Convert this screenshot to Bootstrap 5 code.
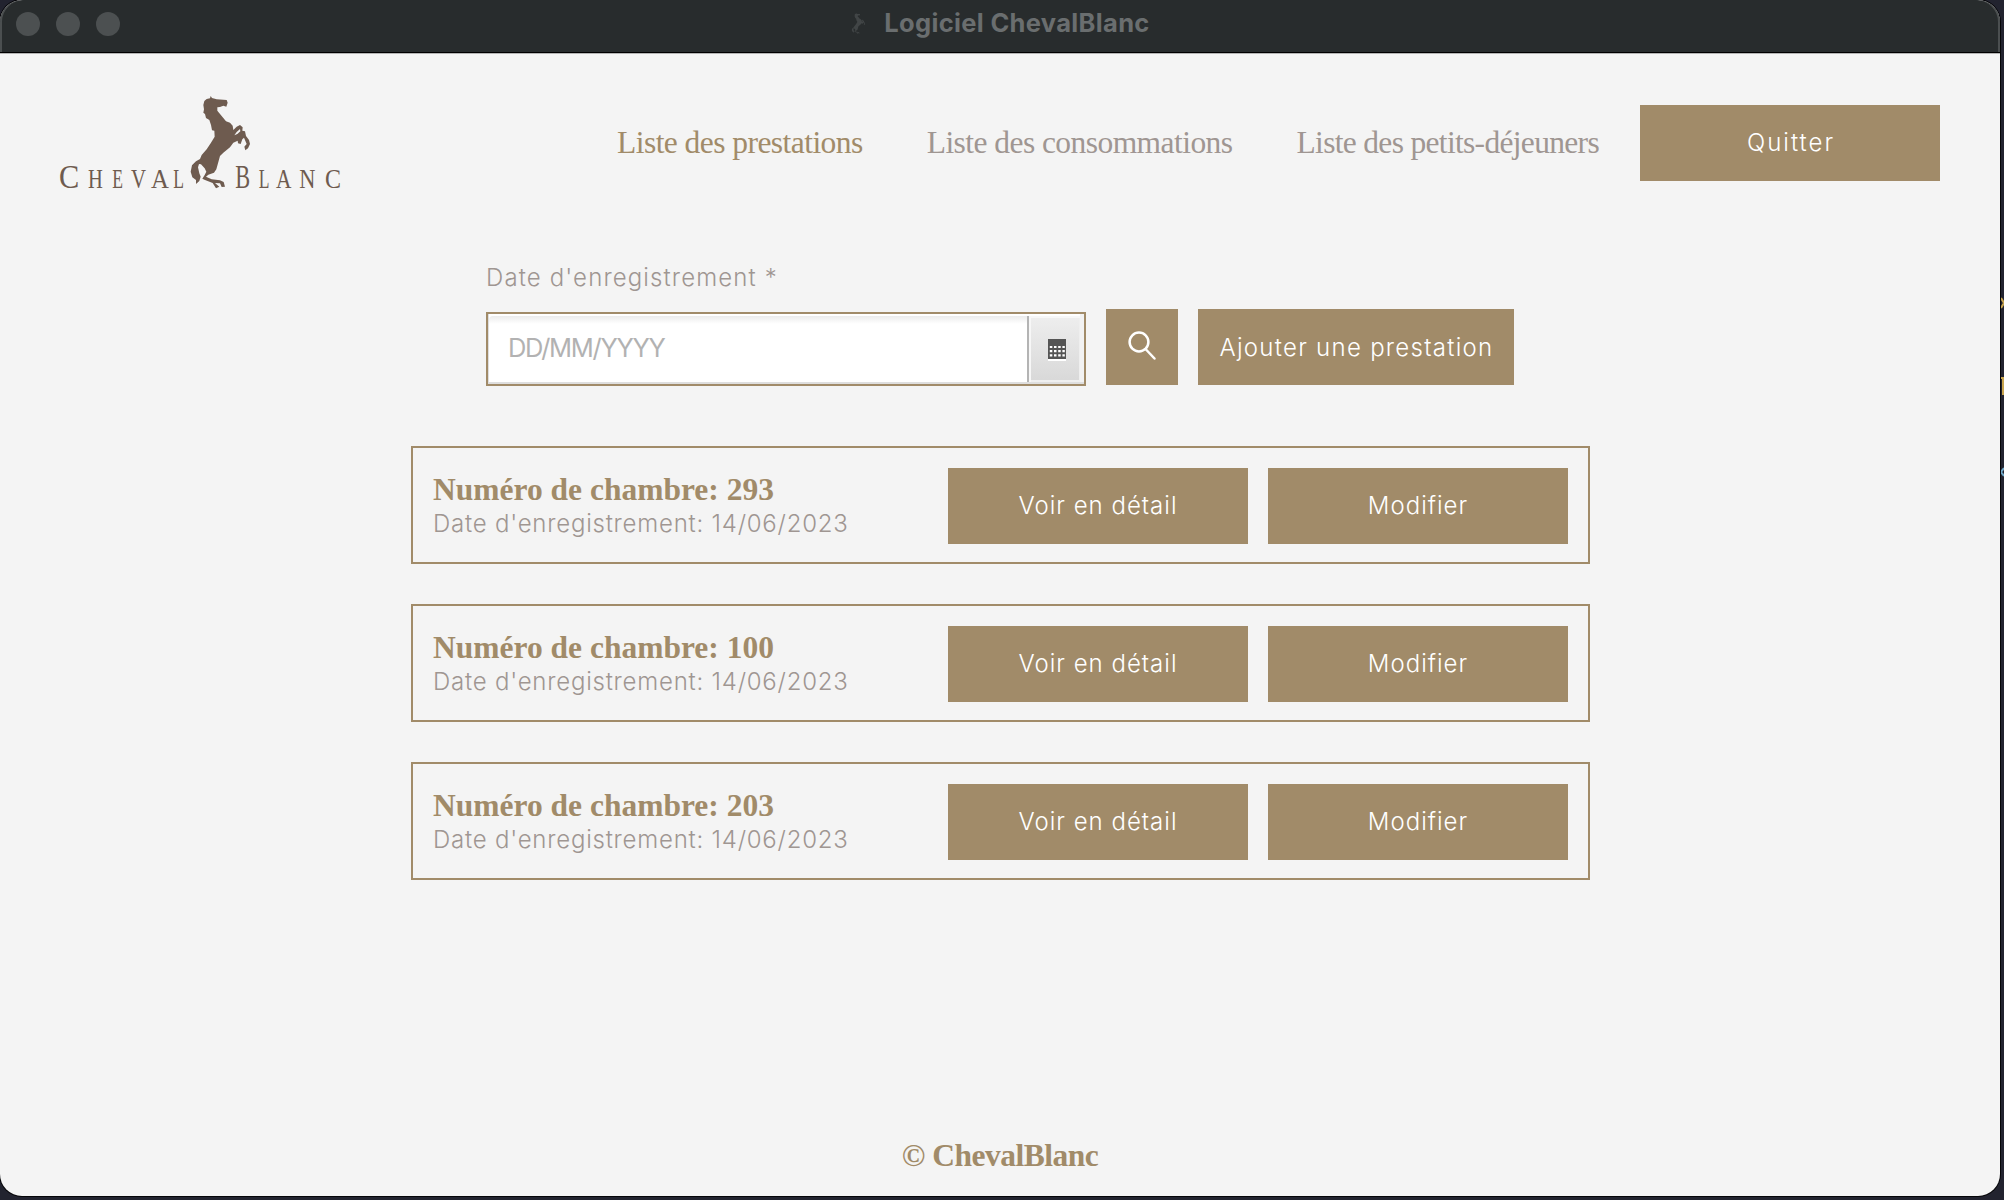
<!DOCTYPE html>
<html lang="fr">
<head>
<meta charset="utf-8">
<title>Logiciel ChevalBlanc</title>
<link href="https://cdn.jsdelivr.net/npm/bootstrap@5.3.0/dist/css/bootstrap.min.css" rel="stylesheet">
<style>
:root { --gold:#a18b69; --greige:#9f9692; --paper:#f4f4f4; }
html, body { height:1200px; overflow:hidden; }
body { background:#22232f; font-family:Inter,"Open Sans",sans-serif; font-weight:300; color:var(--greige); }
.app-window { width:2000px; height:1196px; background:var(--paper); border-radius:22px; overflow:hidden; box-shadow:0 0 0 1px #050508; }
.title-strip { height:54px; flex:none; background:#282c2d; border-bottom:1px solid #b5b5b5; border-radius:22px 22px 0 0; box-shadow:inset 0 -1px #000, inset 2px 0 #4b4f50, inset -2px 0 #4b4f50; }
.dots { gap:16px; padding:12px 0 0 16px; width:300px; }
.dots span { width:24px; height:24px; border-radius:50%; background:#4c5051; }
.app-title { height:46px; gap:17px; color:#6a6e6f; font-weight:700; font-size:25.5px; letter-spacing:.33px; }
.strip-end { width:300px; }
.top-bar { height:178px; padding:0 60px 0 40px; flex:none; }
.logo { margin-top:-6px; }
.menu-link { font-family:"Liberation Serif",serif; font-size:31.5px; line-height:40px; font-weight:400; letter-spacing:-.55px; color:var(--greige); text-decoration:none; white-space:nowrap; }
.menu-link.active { color:var(--gold); }
.menu-link:last-child { letter-spacing:-.68px; }
.menu { gap:64px; margin-right:41px; }
.btn-gold { --bs-btn-bg:var(--gold); --bs-btn-color:#fff; --bs-btn-hover-bg:#8f7a5a; --bs-btn-hover-color:#fff; width:300px; height:76px; border:0; border-radius:0; font-size:24px; font-weight:300; padding:0; white-space:nowrap; letter-spacing:1px; display:flex; align-items:center; justify-content:center; }
.btn-quit { letter-spacing:2px; padding-left:2px; }
.btn-add { width:316px; letter-spacing:1.28px; padding:1px 0 0 1px; }
.btn-find { width:72px; }
.search-row { gap:20px; padding-top:31px; }
.search-row .btn-gold { margin-bottom:1px; }
.field-label { font-size:24px; line-height:30px; letter-spacing:1.12px; margin-bottom:19px; }
.date-box { width:600px; height:74px; border:2px solid var(--gold); background:#fff; box-shadow:inset 1px -2px #dedede, inset -4px 0 #f2f2f2; padding:2px 4px 2px 1px; }
.date-box .form-control { border:0; border-radius:4px 0 0 4px; background:linear-gradient(#ebebeb,#fff 8px); font-size:25.5px; font-weight:400; letter-spacing:-1.3px; padding:0 0 2px 19px; }
.date-box .form-control::placeholder { color:#b2b2b2; opacity:1; }
.cal-btn { width:53px; border:0; border-left:2px solid #b4b4b4; background:linear-gradient(#eee,#d8d8d8); box-shadow:inset 2px 2px #f7f7f7, inset -1px -2px #efefef; padding:2px 0 0 5px; }
.records { gap:40px; margin:60px 0 0 1px; }
.record { width:1179px; height:118px; border:2px solid var(--gold); padding:1px 20px 0; gap:20px; }
.record-title, .foot { font-family:"Liberation Serif",serif; font-weight:700; font-size:31.5px; color:var(--gold); }
.record-title { line-height:34px; padding-top:2px; }
.record-date { font-size:24px; line-height:34px; letter-spacing:.77px; }
.foot { line-height:40px; padding-bottom:20px; letter-spacing:-.5px; }
.edge-mark { position:absolute; left:2001px; overflow:hidden; }
</style>
</head>
<body>
<svg class="d-none">
  <symbol id="horse" viewBox="450 46 184 282">
    <path fill-rule="evenodd" d="M512 48L516 54 530 58 560 60 563 68 559 80 550 77 540 81 532 82 532 92 545 108 558 124 570 128 578 137 580 150 590 140 600 135 608 142 607 152 615 154 618 168 627 180 630 192 624 205 616 211 613 200 620 192 612 173 607 178 602 192 594 190 593 182 580 188 570 202 550 218 540 228 534 250 529 268 522 278 505 284 498 290 515 298 540 301 551 306 555 320 545 321 540 310 525 309 538 320 528 325 518 309 495 300 487 296 494 285 499 275 494 265 483 253 477 252 474 262 478 280 482 290 478 303 468 312 468 300 457 292 452 275 456 256 468 244 480 237 485 225 500 208 512 190 524 170 523 152 516 151 513 135 508 120 498 114 495 102 490 98 492 88 490 75 493 63 500 57 510 55ZM583 166L590 156 600 147 601 154 592 162Z"/>
  </symbol>
</svg>

<div class="app-window d-flex flex-column">
  <div class="title-strip d-flex justify-content-between">
    <div class="dots d-flex"><span></span><span></span><span></span></div>
    <div class="app-title d-flex align-items-center">
      <svg width="17" height="21" fill="#414546"><use href="#horse"/></svg>
      <span>Logiciel ChevalBlanc</span>
    </div>
    <div class="strip-end"></div>
  </div>

  <header class="top-bar d-flex align-items-center">
    <svg class="logo" width="320" height="120" viewBox="0 0 960 360" fill="#6e5b4f">
      <use href="#horse" x="450" y="46" width="184" height="282"/>
      <g font-family="Liberation Serif, serif" font-size="80">
        <text font-size="100" transform="translate(57 323) scale(.91 1)">C</text>
        <text transform="translate(144 323) scale(.77 1)">H</text>
        <text transform="translate(217 323) scale(.66 1)">E</text>
        <text transform="translate(273 323) scale(.78 1)">V</text>
        <text transform="translate(333 323) scale(.93 1)">A</text>
        <text transform="translate(400 323) scale(.66 1)">L</text>
        <text font-size="100" transform="translate(586 323) scale(.67 1)">B</text>
        <text transform="translate(656 323) scale(.66 1)">L</text>
        <text transform="translate(708 323) scale(.8 1)">A</text>
        <text transform="translate(778 323) scale(.84 1)">N</text>
        <text transform="translate(855 323) scale(.9 1)">C</text>
      </g>
    </svg>
    <nav class="menu d-flex ms-auto">
      <a class="menu-link active" href="#">Liste des prestations</a>
      <a class="menu-link" href="#">Liste des consommations</a>
      <a class="menu-link" href="#">Liste des petits-déjeuners</a>
    </nav>
    <button class="btn btn-gold btn-quit" type="button">Quitter</button>
  </header>

  <main class="d-flex flex-column align-items-center">
    <form class="search-row d-flex align-items-end">
      <div class="d-flex flex-column">
        <label class="field-label" for="date">Date d'enregistrement *</label>
        <div class="date-box d-flex">
          <input id="date" class="form-control flex-fill" type="text" placeholder="DD/MM/YYYY">
          <button class="cal-btn flex-shrink-0 d-flex align-items-center justify-content-center" type="button" aria-label="Calendrier">
            <svg width="18" height="22"><path fill="#fff" d="M0 2h18v20H0z"/><path fill="#555" d="M0 0h18v20H0z"/><path stroke="#fff" stroke-width="2.2" stroke-dasharray="2.5 1.7" d="M1.8 8h15M1.8 12.2h15M1.8 16.4h15"/></svg>
          </button>
        </div>
      </div>
      <button class="btn btn-gold btn-find" type="button" aria-label="Rechercher">
        <svg width="30" height="34" fill="none" stroke="#fff" stroke-width="2.5" stroke-linecap="round"><circle cx="12" cy="12" r="9.4"/><path d="M18.5 19L27.5 28.5"/></svg>
      </button>
      <button class="btn btn-gold btn-add" type="button">Ajouter une prestation</button>
    </form>

    <section class="records d-flex flex-column">
      <article class="record d-flex align-items-center">
        <div class="me-auto"><div class="record-title">Numéro de chambre: 293</div><div class="record-date">Date d'enregistrement: 14/06/2023</div></div>
        <button class="btn btn-gold" type="button">Voir en détail</button>
        <button class="btn btn-gold" type="button">Modifier</button>
      </article>
      <article class="record d-flex align-items-center">
        <div class="me-auto"><div class="record-title">Numéro de chambre: 100</div><div class="record-date">Date d'enregistrement: 14/06/2023</div></div>
        <button class="btn btn-gold" type="button">Voir en détail</button>
        <button class="btn btn-gold" type="button">Modifier</button>
      </article>
      <article class="record d-flex align-items-center">
        <div class="me-auto"><div class="record-title">Numéro de chambre: 203</div><div class="record-date">Date d'enregistrement: 14/06/2023</div></div>
        <button class="btn btn-gold" type="button">Voir en détail</button>
        <button class="btn btn-gold" type="button">Modifier</button>
      </article>
    </section>
  </main>

  <footer class="foot mt-auto text-center">© ChevalBlanc</footer>
</div>

<svg class="edge-mark top-0" width="3" height="600" fill="none" stroke-width="2">
  <path stroke="#c9a54e" d="M0 298L3 303 0 308M0 378h3M2 378v17"/>
  <path stroke="#6fa8c9" d="M3 468L0 472 3 476"/>
</svg>
<script src="https://cdn.jsdelivr.net/npm/bootstrap@5.3.0/dist/js/bootstrap.bundle.min.js"></script>
</body>
</html>
